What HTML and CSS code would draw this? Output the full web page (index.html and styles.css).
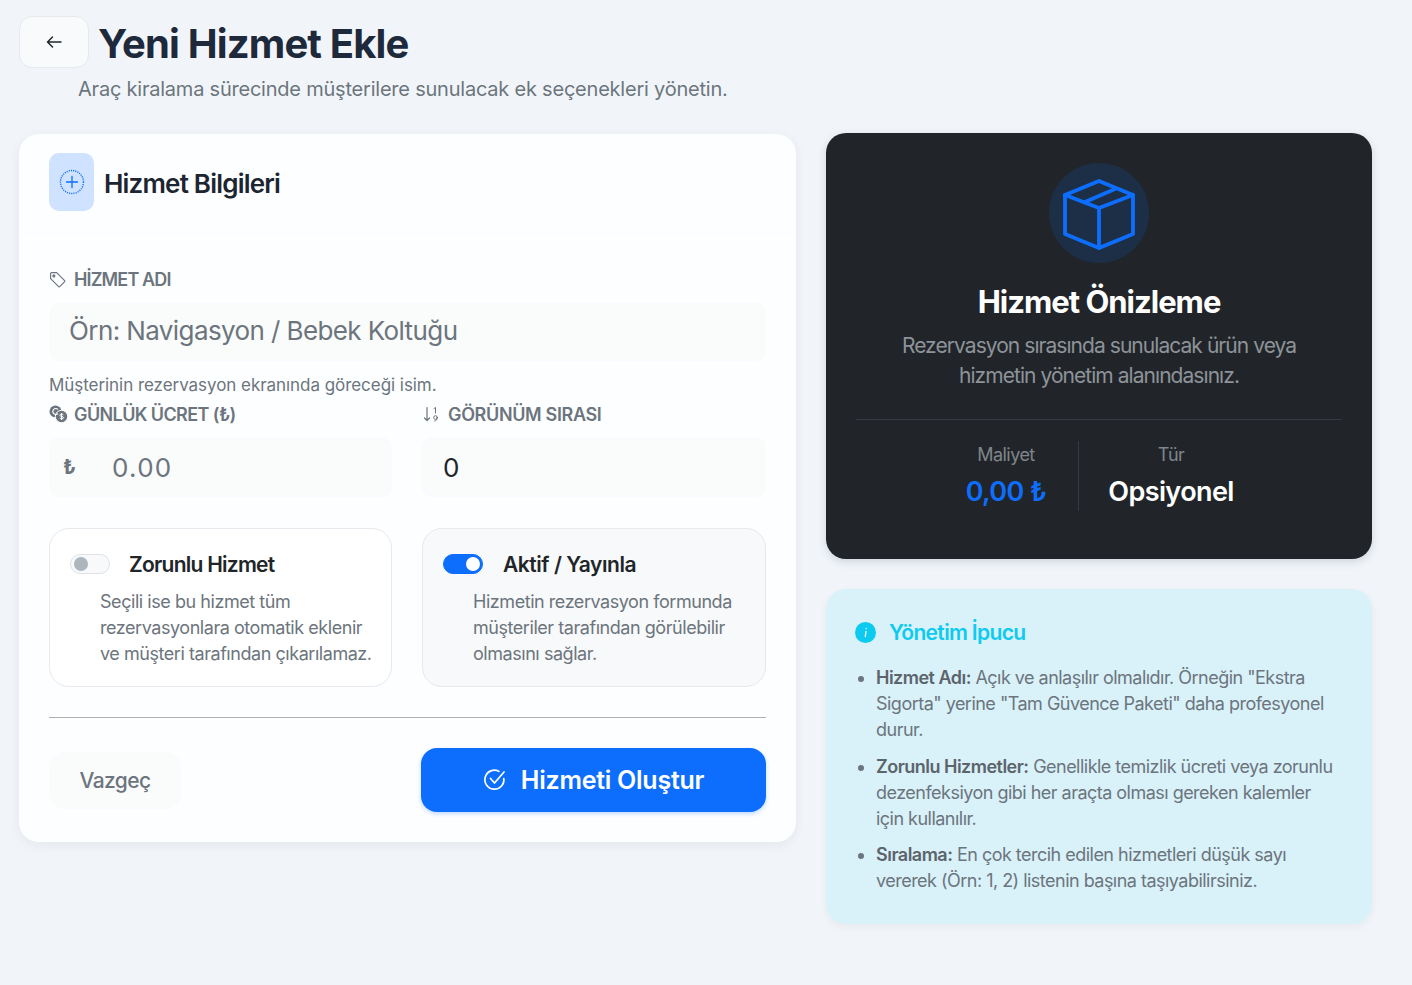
FILE: index.html
```html
<!DOCTYPE html>
<html lang="tr">
<head>
<meta charset="utf-8">
<title>Yeni Hizmet Ekle</title>
<link rel="stylesheet" href="styles.css">
</head>
<body>
<header class="page-head">
  <div class="head-row">
    <button class="back" aria-label="Geri"><svg width="20" height="20" viewBox="0 0 20 20" fill="none" stroke="#212529" stroke-width="1.5" stroke-linecap="round" stroke-linejoin="round"><path d="M17 10H3.5M8.5 5 3.5 10l5 5"/></svg></button>
    <h1>Yeni Hizmet Ekle</h1>
  </div>
  <p class="sub">Araç kiralama sürecinde müşterilere sunulacak ek seçenekleri yönetin.</p>
</header>
<main class="columns">
  <section class="form-card">
    <div class="card-head">
      <span class="head-icon"><svg width="26" height="26" viewBox="0 0 26 26" fill="none" stroke="#0d6efd"><circle cx="13" cy="13" r="11.5" stroke-width="1.4" stroke-dasharray="1.1 1.1"/><path d="M13 7.5v11M7.5 13h11" stroke-width="1.3" stroke-linecap="round"/></svg></span>
      <h2>Hizmet Bilgileri</h2>
    </div>
    <div class="card-body">
      <label class="field-label name-label"><svg width="17" height="17" viewBox="0 0 16 16" fill="none" stroke="#6c757d" stroke-width="1.1" stroke-linejoin="round"><path d="M1.5 2.6c0-.6.5-1.1 1.1-1.100h4.600l7.300 7.300c.4.4.4 1.100 0 1.500l-4.200 4.200c-.4.4-1.100.4-1.500 0L1.500 7.200z"/><circle cx="4.600" cy="4.600" r=".9" fill="#6c757d"/></svg>HİZMET ADI</label>
      <div class="input name-input">Örn: Navigasyon / Bebek Koltuğu</div>
      <p class="help">Müşterinin rezervasyon ekranında göreceği isim.</p>
      <div class="two">
        <div>
          <label class="field-label"><svg width="19" height="18" viewBox="0 0 19 18"><circle cx="6.500" cy="6.500" r="6" fill="#6c757d"/><circle cx="12.500" cy="11.500" r="6.200" fill="#6c757d" stroke="#fff" stroke-width="1"/><path d="M9 4.400a3 3 0 1 0 0 4.200" fill="none" stroke="#fff" stroke-width="1.200"/><path d="M14.400 9.800c-.5-.8-3.600-1-3.600.5 0 1.600 3.800.7 3.800 2.400 0 1.400-3 1.400-3.900.3M12.600 8v7" fill="none" stroke="#fff" stroke-width="1"/></svg>GÜNLÜK ÜCRET (₺)</label>
          <div class="input price-input"><span class="lira">₺</span><span class="ph">0.00</span></div>
        </div>
        <div>
          <label class="field-label order-label"><svg width="18" height="17" viewBox="0 0 18 17" fill="none" stroke="#6c757d" stroke-width="1.200" stroke-linecap="round" stroke-linejoin="round"><path d="M5 1.500v13M2.500 12 5 14.500 7.500 12"/><path d="M12 2.500l1.500-1v5.500" stroke-width="1"/><circle cx="13.500" cy="11.500" r="1.800" stroke-width="1"/><path d="M15.300 11.500c0 2-1 3.300-2.600 3.500" stroke-width="1"/></svg>GÖRÜNÜM SIRASI</label>
          <div class="input order-input">0</div>
        </div>
      </div>
      <div class="two option-row">
        <div class="option">
          <div class="option-title"><span class="switch"></span><strong>Zorunlu Hizmet</strong></div>
          <p>Seçili ise bu hizmet tüm rezervasyonlara otomatik eklenir ve müşteri tarafından çıkarılamaz.</p>
        </div>
        <div class="option active">
          <div class="option-title"><span class="switch on"></span><strong>Aktif / Yayınla</strong></div>
          <p>Hizmetin rezervasyon formunda müşteriler tarafından görülebilir olmasını sağlar.</p>
        </div>
      </div>
      <hr class="rule">
      <div class="actions">
        <button class="cancel">Vazgeç</button>
        <button class="submit"><svg width="24" height="24" viewBox="0 0 24 24" fill="none" stroke="#fff" stroke-width="1.700" stroke-linecap="round" stroke-linejoin="round"><path d="M20.800 10.500A9.500 9.500 0 1 1 16 3.400"/><path d="M7.500 10.500l4 4.500 9.500-11"/></svg>Hizmeti Oluştur</button>
      </div>
    </div>
  </section>
  <aside class="side">
    <section class="preview">
      <div class="cube-wrap"><svg width="72" height="74" viewBox="0 0 72 74" fill="none" stroke="#0d6efd" stroke-width="3.800" stroke-linejoin="round" stroke-linecap="round"><path d="M36 5 70 19v39L36 72 2 58V19z"/><path d="M2 19l34 13 34-13M36 32v40"/><path d="M22 26 52 13"/></svg></div>
      <h3>Hizmet Önizleme</h3>
      <p class="preview-text">Rezervasyon sırasında sunulacak ürün veya hizmetin yönetim alanındasınız.</p>
      <div class="stats">
        <div class="stat cost"><span>Maliyet</span><b>0,00 ₺</b></div>
        <div class="stat type"><span>Tür</span><b>Opsiyonel</b></div>
      </div>
    </section>
    <section class="tip">
      <div class="tip-title"><svg width="21" height="21" viewBox="0 0 21 21"><circle cx="10.500" cy="10.500" r="10.500" fill="#0dcaf0"/><path d="M11 9.500l-.7 5M11.200 6.300v.2" stroke="#fff" stroke-width="1.300" stroke-linecap="round"/></svg><span>Yönetim İpucu</span></div>
      <ul>
        <li><b>Hizmet Adı:</b> Açık ve anlaşılır olmalıdır. Örneğin "Ekstra Sigorta" yerine "Tam Güvence Paketi" daha profesyonel durur.</li>
        <li><b>Zorunlu Hizmetler:</b> Genellikle temizlik ücreti veya zorunlu dezenfeksiyon gibi her araçta olması gereken kalemler için kullanılır.</li>
        <li><b>Sıralama:</b> En çok tercih edilen hizmetleri düşük sayı vererek (Örn: 1, 2) listenin başına taşıyabilirsiniz.</li>
      </ul>
    </section>
  </aside>
</main>
</body>
</html>
```
FILE: styles.css
```css
* { box-sizing: border-box; }
html, body { margin: 0; }
body {
  min-height: 985px;
  padding: 16px 40px 0 19px;
  background: #f1f5f9;
  color: #212529;
  font-family: "Inter", "Liberation Sans", sans-serif;
  overflow: hidden;
}
button { font-family: inherit; border: 0; }
.head-row { display: flex; align-items: flex-start; gap: 9px; }
.back {
  width: 70px; height: 52px; padding: 0;
  display: flex; align-items: center; justify-content: center;
  background: #f8fafc; border: 1px solid #e6e9ed; border-radius: 13px;
}
h1 { margin: 0; font-size: 40px; line-height: 56px; font-weight: 700; letter-spacing: -.85px; color: #1e293b; }
.sub { margin: 3px 0 0 59px; font-size: 20px; line-height: 28px; letter-spacing: -.22px; color: #6c757d; }
.columns { display: flex; gap: 30px; align-items: flex-start; margin-top: 31px; }
.form-card {
  width: 777px; height: 708px; background: #fdfeff; border-radius: 20px;
  box-shadow: 0 3px 12px rgba(30, 41, 59, .06);
}
.card-head { height: 100px; padding: 19px 30px 0; display: flex; gap: 10px; align-items: flex-start; border-bottom: 1px solid #fafbfc; }
.head-icon { width: 45px; height: 58px; display: flex; align-items: center; justify-content: center; background: #cfe2ff; border-radius: 10px; }
h2 { margin: 0; font-size: 26px; line-height: 62px; font-weight: 600; letter-spacing: -.8px; color: #1c2530; }
.card-body { padding: 33px 30px 0; }
.field-label { display: flex; align-items: center; gap: 6px; height: 24px; font-size: 18px; font-weight: 600; letter-spacing: -.6px; color: #6c757d; }
.field-label.name-label { gap: 8px; letter-spacing: -.85px; }
.field-label.order-label { gap: 8px; letter-spacing: -.35px; }
.input { height: 60px; background: #fafbfb; border-radius: 10px; display: flex; align-items: center; font-size: 26px; letter-spacing: -.6px; color: #6c757d; }
.name-input { margin-top: 12px; padding: 0 0 3px 20px; height: 58px; }
.help { margin: 12px 0 0; font-size: 17px; line-height: 24px; letter-spacing: -.05px; color: #6c757d; }
.two { display: grid; grid-template-columns: 343px 344px; gap: 30px; }
.two .field-label { margin-top: 5px; margin-bottom: 11px; }
.price-input { padding-left: 14px; }
.lira { width: 49px; font-size: 20px; font-weight: 700; }
.ph { letter-spacing: 1.300px; }
.order-input { padding-left: 21px; color: #212529; }
.option-row { margin-top: 31px; }
.option { height: 159px; padding: 20px 14px 0 20px; border: 1px solid #e6e9ed; border-radius: 20px; background: #fff; }
.option.active { background: #f8f9fa; }
.option-title { display: flex; align-items: center; gap: 19px; height: 30px; }
.active .option-title { gap: 20px; }
.option-title strong { font-size: 21px; font-weight: 600; letter-spacing: -.75px; color: #212529; }
.active .option-title strong { letter-spacing: -.45px; }
.switch { position: relative; width: 40px; height: 20px; border-radius: 10px; background: #f8f9fa; border: 1px solid #dee2e6; }
.switch::after { content: ""; position: absolute; left: 3px; top: 2px; width: 14px; height: 14px; border-radius: 50%; background: #adb5bd; }
.switch.on { background: #0d6efd; border-color: #0d6efd; }
.switch.on::after { left: 22px; background: #fff; }
.option p { margin: 10px 0 0 30px; font-size: 18px; line-height: 26px; letter-spacing: -.45px; color: #6c757d; }
.rule { margin: 30px 0 0; border: 0; border-top: 1px solid #adb1b5; }
.actions { display: flex; justify-content: space-between; align-items: center; margin-top: 30px; }
.cancel { width: 132px; height: 57px; background: #fafbfb; border-radius: 16px; font-size: 21px; font-weight: 500; letter-spacing: -.6px; color: #6c757d; }
.submit {
  width: 345px; height: 64px; display: flex; align-items: center; justify-content: center; gap: 14px;
  background: #0d6efd; border-radius: 16px; color: #fff; font-size: 25px; font-weight: 600; letter-spacing: -.25px;
  box-shadow: 0 2px 4px rgba(13, 110, 253, .25);
}
.side { width: 546px; margin-top: -1px; display: flex; flex-direction: column; gap: 30px; }
.preview { height: 426px; padding: 30px; background: #212529; border-radius: 20px; text-align: center; box-shadow: 0 3px 8px rgba(30, 41, 59, .15); }
.cube-wrap { width: 100px; height: 100px; margin: 0 auto; display: flex; align-items: center; justify-content: center; border-radius: 50%; background: #1c2f47; }
h3 { margin: 20px 0 0; font-size: 31px; line-height: 38px; font-weight: 700; letter-spacing: -1px; color: #fff; }
.preview-text { margin: 10px 30px 0; font-size: 21px; line-height: 30px; letter-spacing: -.95px; color: #8d9399; }
.stats { display: flex; justify-content: center; margin-top: 28px; padding-top: 21px; border-top: 1px solid #343a40; }
.stat { display: flex; flex-direction: column; align-items: center; height: 70px; }
.stat span { font-size: 18px; line-height: 28px; letter-spacing: -.55px; color: #7f858b; }
.stat b { margin-top: 5px; font-size: 27px; line-height: 36px; font-weight: 600; letter-spacing: -.6px; }
.cost { width: 144px; border-right: 1px solid #343a40; }
.cost b { color: #0d6efd; }
.type { width: 185px; }
.type b { color: #fff; }
.tip { height: 335px; padding: 30px 30px 30px 29px; background: #d9f1f9; border-radius: 20px; box-shadow: 0 3px 8px rgba(30, 41, 59, .05); }
.tip-title { display: flex; align-items: center; gap: 13px; height: 26px; font-size: 21px; font-weight: 600; letter-spacing: -.65px; color: #0dcaf0; }
ul { margin: 20px 0 0; padding: 0 0 0 21px; font-size: 18px; line-height: 26.200px; letter-spacing: -.52px; color: #6c757d; }
li { margin-bottom: 10px; }
li::marker { color: #6c757d; }
li b { font-weight: 600; color: #5c646b; }
```
